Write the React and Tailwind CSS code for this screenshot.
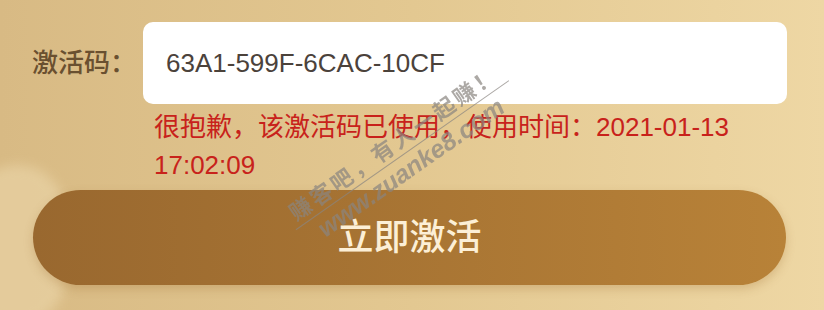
import React from 'react';

const FONT = { fontFamily: '"Liberation Sans", "Noto Sans CJK SC", sans-serif' };

export default function App() {
  return (
    <div
      className="relative w-[824px] h-[310px] overflow-hidden bg-gradient-to-r from-[#d8ba84] via-[#e3c891] to-[#eed7a4]"
      style={FONT}
    >
      {/* faint decoration bottom-left */}
      <div className="absolute left-[-30px] top-[165px] w-[95px] h-[160px] rounded-full bg-[#ecd7ab] opacity-60 blur-[6px]" />

      <div className="relative pt-[22px]">
        {/* code row */}
        <div className="flex items-center">
          <div className="w-[143px] pl-[32px] text-[26px] font-medium text-[#6a5030]">激活码：</div>
          <div className="w-[644px] h-[82px] rounded-[10px] bg-white flex items-center pl-[23px] text-[26px] text-[#4b423b]">
            63A1-599F-6CAC-10CF
          </div>
        </div>

        {/* error message */}
        <p className="ml-[154px] mt-[4px] w-[633px] text-[26px] leading-[38px] text-[#c8221b]">
          很抱歉，该激活码已使用，使用时间：2021-01-13 17:02:09
        </p>

        {/* action */}
        <button className="mt-[6px] ml-[33px] w-[753px] h-[95px] rounded-full bg-gradient-to-r from-[#99682f] to-[#b88238] shadow-[0_4px_10px_rgba(150,100,40,0.25)] flex items-center justify-center text-[36px] font-medium text-[#fcefd6]">
          立即激活
        </button>
      </div>

      {/* watermark */}
      <div className="absolute left-[403px] top-[156px] pointer-events-none">
        <div className="-translate-x-1/2 -translate-y-1/2 -rotate-[35deg] flex flex-col items-center text-[#8a8580] opacity-70">
          <span className="text-[22px] font-bold tracking-[3px] leading-[26px] whitespace-nowrap">赚客吧，有人一起赚！</span>
          <div className="w-[260px] h-[1px] bg-[#8a8580]" />
          <span className="text-[25px] font-bold italic leading-[28px] whitespace-nowrap">www.zuanke8.com</span>
        </div>
      </div>
    </div>
  );
}
